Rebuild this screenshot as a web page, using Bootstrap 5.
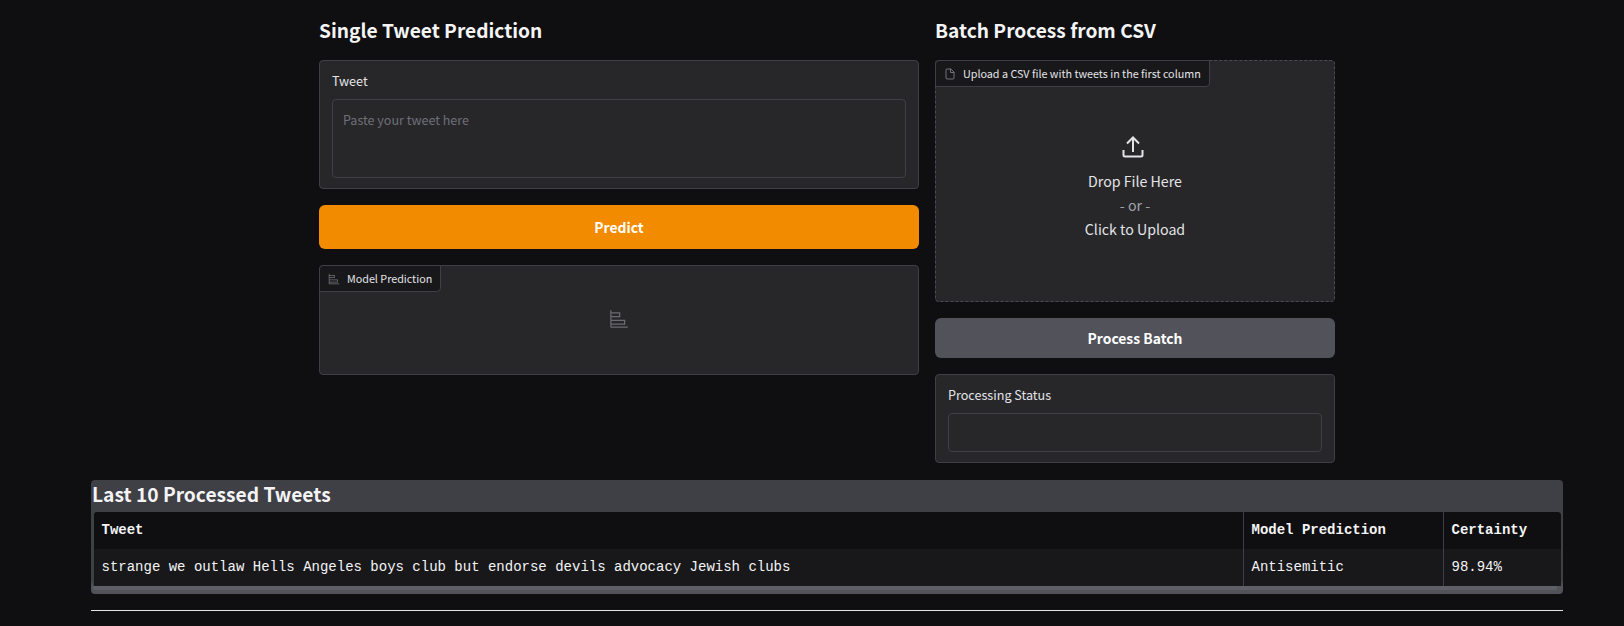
<!DOCTYPE html>
<html lang="en">
<head>
<meta charset="utf-8">
<title>Tweet Prediction</title>
<link href="https://cdn.jsdelivr.net/npm/bootstrap@5.3.0/dist/css/bootstrap.min.css" rel="stylesheet">
<style>
html,body{height:100%;}
body{background:#0f0f11;color:#f4f4f5;font-family:"Noto Sans CJK SC","Noto Sans",sans-serif;font-size:14.2px;overflow:hidden;}
.page-wrap{width:1472px;margin-left:91px;padding-top:16px;}
.top-cols{width:1016px;margin-left:228px;gap:16px;}
.col-left{width:600px;gap:16px;}
.col-right{width:400px;gap:16px;}
.sec-title{font-size:19.15px;font-weight:600;line-height:29px;margin:0 0 -2px;height:30px;color:#f4f4f5;}
.panel{background:#27272a;border:1px solid #3f3f46;border-radius:4px;position:relative;}
.tb-panel{padding:10px 12px 10px;height:129px;}
.field-label{font-size:12.6px;line-height:20px;margin:0 0 8px;color:#e4e4e7;display:block;}
.tb-input{background:#27272a;border:1px solid #3f3f46;border-radius:4px;color:#f4f4f5;font-size:12.55px;padding:9px 10px;height:79px;line-height:21px;resize:none;box-shadow:none;}
.tb-input::placeholder{color:#6f6f78;opacity:1;}
.tb-input:focus{background:#27272a;border-color:#3f3f46;color:#f4f4f5;box-shadow:none;}
.act-btn{border:0;border-radius:6px;font-weight:600;font-size:13.9px;color:#fff;line-height:24px;}
.btn-pred{background:#f38b00;height:44px;}
.btn-pred:hover{background:#f38b00;color:#fff;}
.btn-batch{background:#52525b;height:40px;}
.btn-batch:hover{background:#52525b;color:#fff;}
.tab-tag{position:absolute;left:-1px;top:-1px;height:27px;background:#18181b;border:1px solid #3f3f46;border-radius:4px 0 4px 0;font-size:10.75px;line-height:16px;color:#e4e4e7;display:flex;align-items:center;gap:7px;padding:0 8px;white-space:nowrap;}
.tab-tag svg{flex:none;color:#71717a;}
.out-panel{height:110px;}
.chart-big{color:#6b6b72;margin-top:-3px;}
.drop-panel{height:242px;border-style:dashed;border-color:#4a4a52;}
.drop-inner{height:100%;padding-top:13px;color:#e4e4e7;line-height:24px;}
.up-ico{color:#e4e4e7;margin:0 0 10px -5px;}
.or-line{color:#a1a1aa;}
.st-panel{height:89px;padding:10px 12px 10px;}
.st-panel .tb-input{height:39px;}
.tbl-block{background:#3f3f46;border-radius:4px;margin-top:17px;height:114px;background-image:linear-gradient(#3f3f46 100px,#52525b 106px);padding:0 2px;overflow:hidden;}
.tbl-title{font-size:19.2px;font-weight:600;line-height:29px;height:32px;margin:0 -1px;color:#f4f4f5;}
.tbl-scroll{background:#18181b;border-radius:4px 4px 0 0;overflow:hidden;border-left:1px solid #3f3f46;width:1468px;}
.data-table{width:100%;margin:0;table-layout:fixed;font-family:"Liberation Mono","DejaVu Sans Mono",monospace;font-size:14px;--bs-table-bg:transparent;--bs-table-color:#f4f4f5;border-collapse:collapse;}
.data-table th,.data-table td{padding:0 8px;height:37px;border:0;vertical-align:middle;white-space:nowrap;color:#f4f4f5;}
.data-table th:first-child,.data-table td:first-child{padding-left:7.5px;}
.data-table th{background:#0f0f11;font-weight:700;}
.data-table td{background:#18181b;}
.data-table th+th,.data-table td+td{border-left:1px solid #3f3f46;}
.w-mod{width:200px;}
.w-cert{width:118px;}
.scroll-thumb{height:4px;width:1464px;background:#5f5f68;border-radius:0 0 2px 2px;}
.foot-rule{margin:16px 0 0;border:0;border-top:1px solid #e4e4e7;opacity:1;}
</style>
</head>
<body>
<div class="page-wrap">
  <div class="d-flex align-items-start top-cols">
    <div class="d-flex flex-column col-left">
      <h2 class="sec-title">Single Tweet Prediction</h2>
      <div class="panel tb-panel">
        <label class="field-label" for="tw">Tweet</label>
        <textarea id="tw" class="form-control tb-input" placeholder="Paste your tweet here"></textarea>
      </div>
      <button type="button" class="btn w-100 act-btn btn-pred">Predict</button>
      <div class="panel out-panel d-flex align-items-center justify-content-center">
        <div class="tab-tag">
          <svg width="12" height="12" viewBox="0 0 32 32" aria-hidden="true"><path fill="currentColor" d="M4 2H2v26a2 2 0 0 0 2 2h26v-2H4v-3h22v-8H4v-4h14V5H4Zm20 17v4H4v-4ZM16 7v4H4V7Z"/></svg>
          <span>Model Prediction</span>
        </div>
        <svg class="chart-big" width="20" height="20" viewBox="0 0 32 32" aria-hidden="true"><path fill="currentColor" d="M4 2H2v26a2 2 0 0 0 2 2h26v-2H4v-3h22v-8H4v-4h14V5H4Zm20 17v4H4v-4ZM16 7v4H4V7Z"/></svg>
      </div>
    </div>
    <div class="d-flex flex-column col-right">
      <h2 class="sec-title">Batch Process from CSV</h2>
      <div class="panel drop-panel">
        <div class="tab-tag">
          <svg width="12" height="12" viewBox="0 0 24 24" fill="none" stroke="currentColor" stroke-width="2" stroke-linecap="round" stroke-linejoin="round" aria-hidden="true"><path d="M13 2H6a2 2 0 0 0-2 2v16a2 2 0 0 0 2 2h12a2 2 0 0 0 2-2V9z"/><polyline points="13 2 13 9 20 9"/></svg>
          <span>Upload a CSV file with tweets in the first column</span>
        </div>
        <div class="d-flex flex-column align-items-center justify-content-center text-center drop-inner">
          <svg class="up-ico" width="24" height="24" viewBox="0 0 24 24" fill="none" stroke="currentColor" stroke-width="2" aria-hidden="true"><path d="M2.5 15v5a1.5 1.5 0 0 0 1.5 1.5h16a1.5 1.5 0 0 0 1.5-1.5v-5"/><path d="M12 17V2.5M6 8.5l6-6 6 6"/></svg>
          <div>Drop File Here</div>
          <div class="or-line">- or -</div>
          <div>Click to Upload</div>
        </div>
      </div>
      <button type="button" class="btn w-100 act-btn btn-batch">Process Batch</button>
      <div class="panel st-panel">
        <label class="field-label" for="st">Processing Status</label>
        <input id="st" class="form-control tb-input" type="text">
      </div>
    </div>
  </div>
  <div class="tbl-block">
    <div class="tbl-title">Last 10 Processed Tweets</div>
    <div class="tbl-scroll">
      <table class="table data-table">
        <thead>
          <tr><th>Tweet</th><th class="w-mod">Model Prediction</th><th class="w-cert">Certainty</th></tr>
        </thead>
        <tbody>
          <tr><td>strange we outlaw Hells Angeles boys club but endorse devils advocacy Jewish clubs</td><td>Antisemitic</td><td>98.94%</td></tr>
        </tbody>
      </table>
    </div>
    <div class="scroll-thumb"></div>
  </div>
  <hr class="foot-rule">
</div>
</body>
</html>
